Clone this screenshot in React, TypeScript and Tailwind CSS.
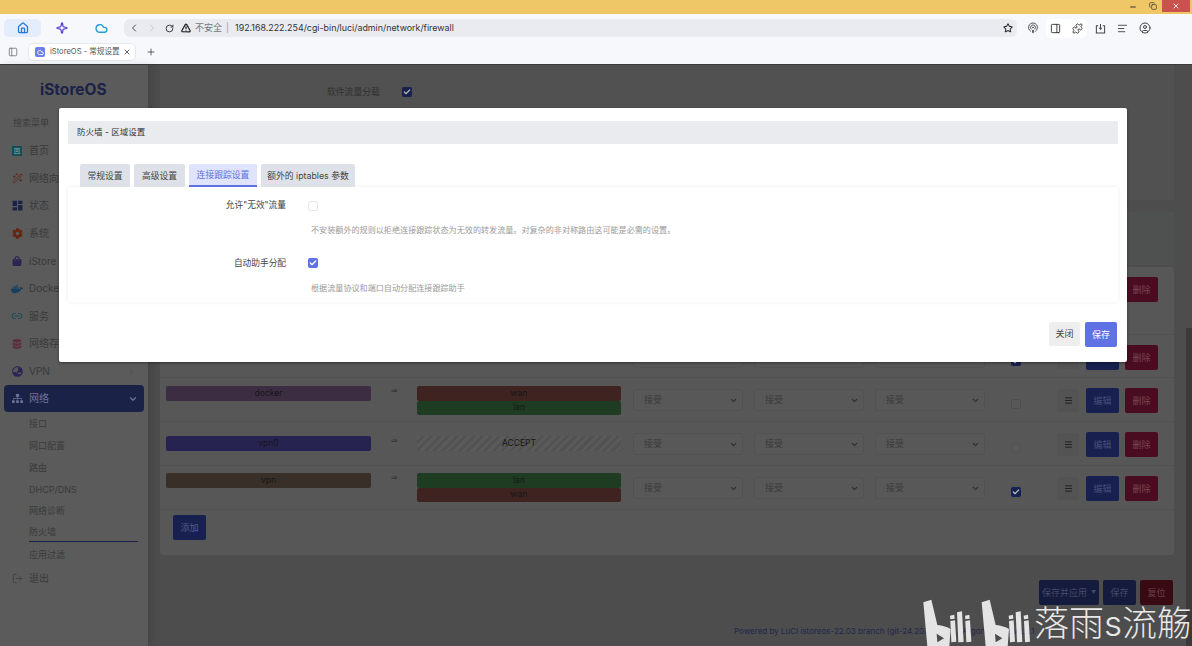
import { AlignLeft, Check, ChevronDown, ChevronLeft, ChevronRight, CircleUser, Cloud, Copy, Home, Link2, LogOut, Menu, Minus, PanelLeft, Plus, Podcast, Puzzle, RotateCw, Sparkle, Star, TriangleAlert, Wand2, X } from 'lucide-react'
import { FaCog, FaDatabase, FaDocker, FaGlobeAsia, FaShoppingBag, FaSitemap } from 'react-icons/fa'
import { MdDashboard } from 'react-icons/md'
import { clsx } from 'clsx'
import type { ReactNode } from 'react'

const menu: { label: string; icon: ReactNode; chevron?: boolean }[] = [
  { label: '首页', icon: <div className="flex h-[10px] w-[10px] items-center justify-center bg-[#164e57] text-[6px] leading-none text-[#8fb4b8]">回</div> },
  { label: '网络向导', icon: <Wand2 size={11} className="text-[#5e2a20]" /> },
  { label: '状态', icon: <MdDashboard size={13} className="text-[#1a2248]" /> },
  { label: '系统', icon: <FaCog size={11} className="text-[#642612]" /> },
  { label: 'iStore', icon: <FaShoppingBag size={10} className="text-[#2a2354]" /> },
  { label: 'Docker', icon: <FaDocker size={12} className="text-[#143f60]" /> },
  { label: '服务', icon: <Link2 size={12} className="text-[#134c56]" /> },
  { label: '网络存储', icon: <FaDatabase size={10} className="text-[#5c303e]" /> },
  { label: 'VPN', icon: <FaGlobeAsia size={11} className="text-[#2a2354]" />, chevron: true },
]

const subMenu = ['接口', '网口配置', '路由', 'DHCP/DNS', '网络诊断', '防火墙', '应用过滤']

type Zone = { name: string; chip: string; targets: string[]; check: 'on' | 'off' | 'faint'; h: string; chipTop: string; arrowTop: string }

const zones: Zone[] = [
  { name: 'lan', chip: 'bg-[#1e3c22]', targets: ['wan'], check: 'off', h: 'h-[68px]', chipTop: 'mt-[8px]', arrowTop: 'mt-[7px]' },
  { name: 'wan', chip: 'bg-[#3e2321]', targets: ['lan'], check: 'on', h: 'h-[43px]', chipTop: 'mt-[8px]', arrowTop: 'mt-[7px]' },
  { name: 'docker', chip: 'bg-[#3c2d43]', targets: ['wan', 'lan'], check: 'off', h: 'h-[44px]', chipTop: 'mt-[8px]', arrowTop: 'mt-[7px]' },
  { name: 'vpn0', chip: 'bg-[#272350]', targets: [], check: 'faint', h: 'h-[44px]', chipTop: 'mt-[14px]', arrowTop: 'mt-[13px]' },
  { name: 'vpn', chip: 'bg-[#382f28]', targets: ['lan', 'wan'], check: 'on', h: 'h-[44px]', chipTop: 'mt-[7px]', arrowTop: 'mt-[6px]' },
]

function Chip({ name }: { name: string }) {
  return (
    <div className={clsx('flex h-[14.5px] items-center justify-center rounded-[2px] text-[8.5px] text-[#161616]', name === 'wan' ? 'bg-[#3e2321]' : 'bg-[#1e3c22]')}>
      {name}
    </div>
  )
}

function FakeSelect() {
  return (
    <div className="flex h-[22px] w-[110px] items-center justify-between rounded-[3px] border border-[#525252] bg-[#585858] pl-[10px] pr-[4px] text-[9px] text-[#3a3a3a]">
      接受
      <ChevronDown size={9} strokeWidth={3} className="text-[#2e2e2e]" />
    </div>
  )
}

function ZoneRow({ zone }: { zone: Zone }) {
  return (
    <div className={clsx('flex items-start border-b border-[#525252] pl-[6px]', zone.h)}>
      <div className={clsx('flex h-[14.5px] w-[205px] items-center justify-center rounded-[2px] text-[8.5px] text-[#161616]', zone.chip, zone.chipTop)}>
        {zone.name}
      </div>
      <div className={clsx("w-[46px] text-center text-[8px] leading-[12px] text-[#2c2c2c] [font-family:'DejaVu_Sans',sans-serif]", zone.arrowTop)}>⇒</div>
      <div className={clsx('w-[204px]', zone.chipTop)}>
        {zone.targets.length > 0 ? (
          zone.targets.map((t) => <Chip key={t} name={t} />)
        ) : (
          <div className="flex h-[14.5px] items-center justify-center bg-[repeating-linear-gradient(135deg,#5a5a5a_0,#5a5a5a_3px,#525252_3px,#525252_6px)] text-[8.5px] text-[#161616]">ACCEPT</div>
        )}
      </div>
      <div className="ml-[12px] mt-[11px] flex gap-[11px]">
        <FakeSelect />
        <FakeSelect />
        <FakeSelect />
      </div>
      <div className="ml-[26px] mt-[21px] w-[10px]">
        {zone.check === 'on' ? (
          <div className="flex h-[10px] w-[10px] items-center justify-center rounded-[2px] bg-[#182050]">
            <Check size={8} strokeWidth={4} className="text-[#b8b8b8]" />
          </div>
        ) : (
          <div className={clsx('h-[10px] w-[10px] rounded-[2px] border bg-[#585858]', zone.check === 'off' ? 'border-[#4e4e4e]' : 'border-[#525252]')} />
        )}
      </div>
      <div className="ml-[36px] mt-[11px] flex h-[23px] w-[22px] items-center justify-center rounded-[2px] bg-[#535353]">
        <Menu size={9} strokeWidth={2.5} className="text-[#1e1e1e]" />
      </div>
      <div className="ml-[7px] mt-[10px] flex h-[25px] w-[33px] items-center justify-center rounded-[2px] bg-[#182050] text-[9px] text-[#484f76]">编辑</div>
      <div className="ml-[6px] mt-[10px] flex h-[25px] w-[33px] items-center justify-center rounded-[2px] bg-[#4a0c20] text-[9px] text-[#784654]">删除</div>
    </div>
  )
}

function BrowserChrome() {
  return (
    <>
      <div className="flex h-[14px] items-start justify-end bg-[#efc766]">
        <Minus size={8} strokeWidth={3} className="mr-[12px] mt-[3px] text-[#333]" />
        <Copy size={8} strokeWidth={2} className="mr-[5px] mt-[2px] text-[#333]" />
        <div className="mr-[2px] flex h-[12px] w-[28px] items-center justify-center bg-[#c9524f]">
          <X size={8} strokeWidth={2.5} className="text-white" />
        </div>
      </div>
      <div className="flex h-[28px] items-center bg-[#f6f8fc] pl-[4px] pr-[38px]">
        <div className="flex h-[18px] w-[37px] items-center justify-center rounded-[5px] bg-[#e4edfb]">
          <Home size={12} strokeWidth={2.5} className="text-[#1f7ae0]" />
        </div>
        <div className="flex w-[42px] justify-center">
          <Sparkle size={12} strokeWidth={2.5} className="text-[#5b3fd6]" />
        </div>
        <div className="flex w-[37px] justify-center">
          <Cloud size={13} strokeWidth={2.5} className="text-[#1f9fd6]" />
        </div>
        <div className="ml-[4px] flex h-[18px] w-[893px] items-center rounded-[6px] bg-[#e9ebf1] pl-[4px] pr-[4px]">
          <ChevronLeft size={12} className="text-[#444]" />
          <ChevronRight size={12} className="ml-[6px] text-[#c4c6cc]" />
          <RotateCw size={9} strokeWidth={2.5} className="ml-[7px] text-[#333]" />
          <TriangleAlert size={10} strokeWidth={3} className="ml-[7px] text-[#222]" />
          <span className="ml-[4px] text-[9px] text-[#777]">不安全</span>
          <span className="ml-[4px] text-[9px] text-[#999]">|</span>
          <span className="ml-[6px] text-[8.9px] text-[#333]">192.168.222.254/cgi-bin/luci/admin/network/firewall</span>
          <Star size={10} strokeWidth={2.5} className="ml-auto text-[#333]" />
        </div>
        <Podcast size={12} className="ml-[10px] text-[#555]" />
        <div className="ml-[7px] flex h-[19px] w-[41px] items-center justify-between rounded-[5px] bg-white px-[4px]">
          <PanelLeft size={11} className="rotate-180 text-[#333]" />
          <Puzzle size={11} className="text-[#333]" />
        </div>
        <svg viewBox="0 0 12 12" className="ml-[8px] h-[11px] w-[11px] text-[#444]" fill="none" stroke="currentColor" strokeWidth="1.1">
          <path d="M3.5 3H1.5v8h9V3H8.5" />
          <path d="M6 1v5.5M4.5 5.2 6 6.8l1.5-1.6" />
        </svg>
        <AlignLeft size={11} className="ml-[11px] text-[#444]" />
        <CircleUser size={12} className="ml-[11px] text-[#444]" />
      </div>
      <div className="flex h-[23px] items-start border-b border-[#3a3a3a] bg-[#f6f8fc] pl-[8px] pt-[1px]">
        <PanelLeft size={10} className="mt-[4px] text-[#777]" />
        <div className="ml-[10px] flex h-[18px] w-[108px] items-center rounded-[5px] border border-[#e6e8ec] bg-white pl-[6px] pr-[4px]">
          <div className="flex h-[10px] w-[10px] shrink-0 items-center justify-center rounded-[2px] bg-[#6d7fe6]">
            <Cloud size={7} strokeWidth={3} className="text-white" />
          </div>
          <span className="ml-[5px] whitespace-nowrap text-[7.6px] text-[#555]">iStoreOS - 常规设置</span>
          <X size={8} strokeWidth={2.5} className="ml-auto shrink-0 text-[#444]" />
        </div>
        <Plus size={10} className="ml-[10px] mt-[4px] text-[#444]" />
      </div>
    </>
  )
}

function Sidebar() {
  return (
    <aside className="flex w-[148px] shrink-0 flex-col bg-[#5b5b5b] shadow-[4px_0_8px_rgba(0,0,0,0.12)]">
      <div className="pl-[40px] pt-[15px] text-[15.5px] font-bold leading-[20px] text-[#1a2248]">iStoreOS</div>
      <div className="ml-[13px] mt-[17px] text-[9px] leading-[12px] text-[#3c3c3c]">搜索菜单</div>
      <div className="mt-[8px]">
        {menu.map((m) => (
          <div key={m.label} className="flex h-[27.6px] items-center pr-[12px] text-[10px] text-[#3a3a3a]">
            <div className="flex w-[29px] justify-center pl-[5px]">{m.icon}</div>
            <span className="whitespace-nowrap">{m.label}</span>
            {m.chevron && <ChevronRight size={9} className="ml-auto text-[#484848]" />}
          </div>
        ))}
      </div>
      <div className="mx-[4px] flex h-[27px] items-center rounded-[4px] bg-[#1a2248] pl-[8px] pr-[6px] text-[10px] text-[#6f7496]">
        <FaSitemap size={11} className="text-[#6f7496]" />
        <span className="ml-[6px]">网络</span>
        <ChevronDown size={10} strokeWidth={3} className="ml-auto" />
      </div>
      <div className="mt-[1px] pl-[29px] pr-[10px]">
        {subMenu.map((s) => (
          <div key={s} className={clsx('flex items-center text-[9px] text-[#3a3a3a]', s === '防火墙' ? 'mb-[1.7px] h-[20px] border-b border-[#1a2248]' : 'h-[21.7px]')}>
            {s}
          </div>
        ))}
      </div>
      <div className="flex h-[27px] items-center text-[10px] text-[#3a3a3a]">
        <div className="flex w-[29px] justify-center pl-[5px]">
          <LogOut size={11} className="text-[#404040]" />
        </div>
        退出
      </div>
    </aside>
  )
}

function MainContent() {
  return (
    <main className="relative min-w-0 flex-1 pl-[12px] pr-[18px]">
      <div className="h-[135px] bg-[#515151]">
        <div className="flex items-center pl-[167px] pt-[21px] text-[8.8px] leading-[12px] text-[#303030]">
          软件流量分载
          <div className="ml-[22px] flex h-[10px] w-[10px] items-center justify-center rounded-[2px] bg-[#182050]">
            <Check size={8} strokeWidth={4} className="text-[#b0b0b0]" />
          </div>
        </div>
      </div>
      <div className="mt-[12px] h-[53px] bg-[#4f5151]" />
      <div className="mt-[2px] h-[288px] rounded-[3px] bg-[#575757]">
        {zones.map((z) => (
          <ZoneRow key={z.name} zone={z} />
        ))}
        <div className="ml-[13px] mt-[5px] flex h-[25px] w-[33px] items-center justify-center rounded-[2px] bg-[#182050] text-[9px] text-[#565d86]">添加</div>
      </div>
      <div className="mt-[25px] flex justify-end gap-[4px] pr-[1px] text-[9px]">
        <div className="flex h-[25px] w-[60px] items-center justify-center gap-[4px] rounded-[2px] bg-[#141b3c] text-[#444a6a]">
          保存并应用
          <span className="text-[5px]">▼</span>
        </div>
        <div className="flex h-[25px] w-[33px] items-center justify-center rounded-[2px] bg-[#141b3c] text-[#444a6a]">保存</div>
        <div className="flex h-[25px] w-[33px] items-center justify-center rounded-[2px] bg-[#380a14] text-[#6c3f4a]">复位</div>
      </div>
      <div className="mt-[21px] pl-[574px] text-[8px] leading-[10px] whitespace-nowrap text-[#1f274c]">
        Powered by LuCI istoreos-22.03 branch (git-24.207.28177) / ArgonTheme v2.3.1
      </div>
      <div className="absolute bottom-0 right-0 h-[318px] w-[6px] bg-[#3a3a3a]" />
    </main>
  )
}

function ZoneDialog() {
  const tabs = [
    { label: '常规设置', w: 'w-[50px]' },
    { label: '高级设置', w: 'w-[51px]' },
    { label: '连接跟踪设置', w: 'w-[68px]' },
    { label: '额外的 iptables 参数', w: 'w-[94px]' },
  ]
  return (
    <div className="absolute left-[59px] top-[43px] h-[254px] w-[1068px] rounded-[2px] bg-white px-[9px] pt-[13px] shadow-[0_1px_3px_rgba(0,0,0,0.4)]">
      <div className="flex h-[23px] items-center rounded-[1px] bg-[#e9ebef] pl-[9px] text-[8.5px] text-[#333]">防火墙 - 区域设置</div>
      <div className="ml-[12px] mt-[20px] flex h-[23px] gap-[4px]">
        {tabs.map((t) => (
          <div
            key={t.label}
            className={clsx(
              'flex items-center justify-center whitespace-nowrap rounded-t-[2px] text-[8.8px]',
              t.w,
              t.label === '连接跟踪设置' ? 'border-b-2 border-[#5e72e4] bg-[#dfe3fb] text-[#5e72e4]' : 'bg-[#dee2e8] text-[#444]',
            )}
          >
            {t.label}
          </div>
        ))}
      </div>
      <div className="h-[115px] rounded-[3px] bg-white shadow-[0_0_4px_rgba(0,0,0,0.08)]">
        <div className="flex h-[57px] pt-[12px]">
          <div className="w-[218px] text-right text-[8.7px] leading-[12px] text-[#444]">允许"无效"流量</div>
          <div className="ml-[22px]">
            <div className="mt-[2px] h-[10px] w-[10px] rounded-[2px] border border-[#e4e6ea] bg-white" />
            <div className="ml-[3px] mt-[13px] whitespace-nowrap text-[8.1px] leading-[12px] text-[#9a9a9a]">
              不安装额外的规则以拒绝连接跟踪状态为无效的转发流量。对复杂的非对称路由这可能是必需的设置。
            </div>
          </div>
        </div>
        <div className="flex pt-[13px]">
          <div className="w-[218px] text-right text-[8.7px] leading-[12px] text-[#444]">自动助手分配</div>
          <div className="ml-[22px]">
            <div className="mt-[1px] flex h-[10px] w-[10px] items-center justify-center rounded-[2px] bg-[#5e72e4]">
              <Check size={8} strokeWidth={4} className="text-white" />
            </div>
            <div className="ml-[3px] mt-[14px] whitespace-nowrap text-[8.1px] leading-[12px] text-[#9a9a9a]">根据流量协议和端口自动分配连接跟踪助手</div>
          </div>
        </div>
      </div>
      <div className="mt-[20px] flex justify-end gap-[5px] pr-[1px] text-[9px]">
        <div className="flex h-[24px] w-[31px] items-center justify-center rounded-[2px] bg-[#eeeeee] text-[#444]">关闭</div>
        <div className="flex h-[25px] w-[32px] items-center justify-center rounded-[2px] bg-[#5e72e4] text-white">保存</div>
      </div>
    </div>
  )
}

// bilibili logo, drawn in the crop's own coordinates
function BiliLogo() {
  const ili = (x: number) => `M${x} 166l13-3 1 12-13 2z M${x + 1} 182l14-2 4 64-15 2z M${x + 21} 156l15-3 5 92-16 1z M${x + 45} 166l13-3 1 12-13 2z M${x + 46} 182l14-2 4 64-15 2z`
  const bee = (x: number) => `M${x} 126l24-8 18 76c16 2 30 6 40 12l-4 52h-66z M${x + 40} 220l2 26 20-12z`
  return (
    <svg viewBox="600 110 330 150" className="absolute left-[920px] top-[597px] h-[50px] w-[110px]" fill="#e4e4e4" fillRule="evenodd">
      <path d={bee(610)} />
      <path d={ili(690)} />
      <path d={bee(785)} />
      <path d={ili(866)} />
    </svg>
  )
}

export default function App() {
  return (
    <div className="relative flex h-[646px] w-[1192px] flex-col overflow-hidden bg-[#4d4d4d] [font-family:Inter,'Noto_Sans_CJK_SC',sans-serif]">
      <BrowserChrome />
      <div className="relative flex min-h-0 flex-1">
        <Sidebar />
        <MainContent />
        <ZoneDialog />
      </div>
      <BiliLogo />
      <div className="absolute left-[1034px] top-[601px] whitespace-nowrap text-[35px] font-light leading-[44px] text-[#e8e8e8]">落雨s流觞</div>
    </div>
  )
}
